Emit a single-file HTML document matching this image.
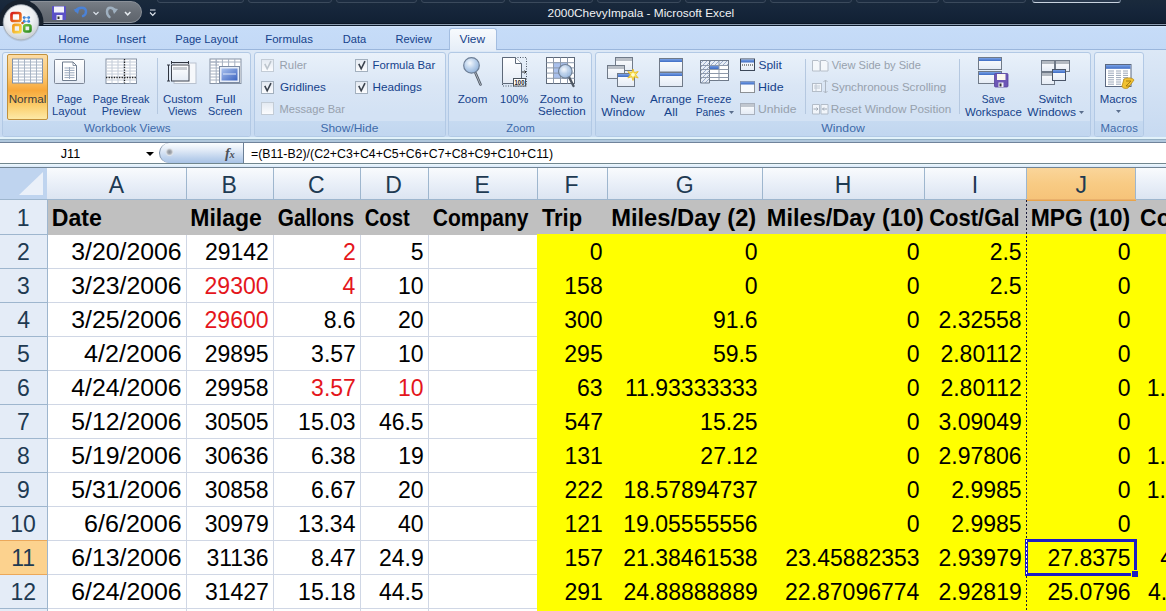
<!DOCTYPE html><html><head><meta charset="utf-8"><style>
*{margin:0;padding:0;box-sizing:border-box}
html,body{width:1166px;height:611px;overflow:hidden;background:#fff;font-family:"Liberation Sans", sans-serif}
.a{position:absolute}
svg text{font-family:"Liberation Sans",sans-serif;white-space:pre}
</style></head><body>
<div class="a" style="left:0;top:0;width:1166px;height:24px;background:linear-gradient(#1a2a3c,#15253a 50%,#112033)"></div>
<div class="a" style="left:0;top:23px;width:1166px;height:1px;background:#0b1524"></div>
<div class="a" style="left:0;top:24px;width:1166px;height:1px;background:#8b9cb0"></div>
<div class="a" style="left:0;top:25px;width:1166px;height:1px;background:#0c1a2c"></div>
<div class="a" style="left:157px;top:-3px;width:87px;height:6px;border:1px solid #3b4a5c;border-radius:3px;background:#1c2c40"></div>
<div class="a" style="left:248px;top:-3px;width:84px;height:6px;border:1px solid #3b4a5c;border-radius:3px;background:#1c2c40"></div>
<div class="a" style="left:336px;top:-3px;width:81px;height:6px;border:1px solid #3b4a5c;border-radius:3px;background:#1c2c40"></div>
<div class="a" style="left:421px;top:-3px;width:84px;height:6px;border:1px solid #3b4a5c;border-radius:3px;background:#1c2c40"></div>
<div class="a" style="left:509px;top:-3px;width:84px;height:6px;border:1px solid #3b4a5c;border-radius:3px;background:#1c2c40"></div>
<div class="a" style="left:597px;top:-3px;width:84px;height:6px;border:1px solid #3b4a5c;border-radius:3px;background:#1c2c40"></div>
<div class="a" style="left:685px;top:-3px;width:81px;height:6px;border:1px solid #3b4a5c;border-radius:3px;background:#1c2c40"></div>
<div class="a" style="left:770px;top:-3px;width:82px;height:6px;border:1px solid #3b4a5c;border-radius:3px;background:#1c2c40"></div>
<div class="a" style="left:856px;top:-3px;width:83px;height:6px;border:1px solid #3b4a5c;border-radius:3px;background:#1c2c40"></div>
<div class="a" style="left:943px;top:-3px;width:83px;height:6px;border:1px solid #3b4a5c;border-radius:3px;background:#1c2c40"></div>
<div class="a" style="left:1032px;top:-3px;width:89px;height:6px;border:1px solid #6f7f92;border-bottom-color:#c8d2de;border-radius:3px;background:#2a3a4e"></div>
<div class="a" style="left:30px;top:1px;width:112px;height:22px;border-radius:0 11px 11px 0;background:linear-gradient(#777d85,#686e76 50%,#5e646c);border:1px solid #8a9098"></div>
<div class="a" style="left:0;top:26px;width:1166px;height:24px;background:linear-gradient(#d6e6fa,#c6dcf8 2px,#c3d9f6)"></div>
<div class="a" style="left:0;top:49px;width:1166px;height:1px;background:#9ab6dc"></div>
<div class="a" style="left:449px;top:28px;width:48px;height:22px;border:1px solid #a3bde0;border-bottom:none;border-radius:3px 3px 0 0;background:linear-gradient(#f7fafd,#e6eef8)"></div>
<div class="a" style="left:0;top:50px;width:1166px;height:88px;background:linear-gradient(#dce8f6,#cfdff3 60%,#c7daf1)"></div>
<div class="a" style="left:450px;top:49px;width:46px;height:2px;background:#e6eef8"></div>
<div class="a" style="left:2px;top:52px;width:249px;height:85px;border:1px solid #b2c9e5;border-radius:3px;background:linear-gradient(#e9f1fa,#dae6f5 40%,#d3e2f4 72%)"></div>
<div class="a" style="left:3px;top:121px;width:247px;height:15px;background:linear-gradient(#c6daf1,#c1d6ef);border-radius:0 0 2px 2px"></div>
<div class="a" style="left:254px;top:52px;width:192px;height:85px;border:1px solid #b2c9e5;border-radius:3px;background:linear-gradient(#e9f1fa,#dae6f5 40%,#d3e2f4 72%)"></div>
<div class="a" style="left:255px;top:121px;width:190px;height:15px;background:linear-gradient(#c6daf1,#c1d6ef);border-radius:0 0 2px 2px"></div>
<div class="a" style="left:448px;top:52px;width:144px;height:85px;border:1px solid #b2c9e5;border-radius:3px;background:linear-gradient(#e9f1fa,#dae6f5 40%,#d3e2f4 72%)"></div>
<div class="a" style="left:449px;top:121px;width:142px;height:15px;background:linear-gradient(#c6daf1,#c1d6ef);border-radius:0 0 2px 2px"></div>
<div class="a" style="left:595px;top:52px;width:496px;height:85px;border:1px solid #b2c9e5;border-radius:3px;background:linear-gradient(#e9f1fa,#dae6f5 40%,#d3e2f4 72%)"></div>
<div class="a" style="left:596px;top:121px;width:494px;height:15px;background:linear-gradient(#c6daf1,#c1d6ef);border-radius:0 0 2px 2px"></div>
<div class="a" style="left:1094px;top:52px;width:50px;height:85px;border:1px solid #b2c9e5;border-radius:3px;background:linear-gradient(#e9f1fa,#dae6f5 40%,#d3e2f4 72%)"></div>
<div class="a" style="left:1095px;top:121px;width:48px;height:15px;background:linear-gradient(#c6daf1,#c1d6ef);border-radius:0 0 2px 2px"></div>
<div class="a" style="left:0;top:137px;width:1166px;height:2px;background:#e2f2fa"></div>
<div class="a" style="left:0;top:139px;width:1166px;height:1px;background:#93b0c4"></div>
<div class="a" style="left:0;top:140px;width:1166px;height:2px;background:#b0c7dc"></div>
<div class="a" style="left:7px;top:54px;width:41px;height:66px;border:1px solid #c2913c;border-radius:2px;background:linear-gradient(#fcdca5,#fbc66e 35%,#f8a83a 55%,#fbcf6e 80%,#fde9a6)"></div>
<div class="a" style="left:157px;top:58px;width:1px;height:56px;background:#b5c8e0"></div>
<div class="a" style="left:261px;top:59px;width:13px;height:13px;border:1px solid #c3ccd6;background:linear-gradient(#e4eaf2,#fbfcfe)"></div>
<div class="a" style="left:261px;top:81px;width:13px;height:13px;border:1px solid #a3b0be;background:linear-gradient(#e4eaf2,#fbfcfe)"></div>
<div class="a" style="left:261px;top:102px;width:13px;height:13px;border:1px solid #c3ccd6;background:linear-gradient(#e4eaf2,#fbfcfe)"></div>
<div class="a" style="left:355px;top:59px;width:13px;height:13px;border:1px solid #a3b0be;background:linear-gradient(#e4eaf2,#fbfcfe)"></div>
<div class="a" style="left:355px;top:81px;width:13px;height:13px;border:1px solid #a3b0be;background:linear-gradient(#e4eaf2,#fbfcfe)"></div>
<div class="a" style="left:805px;top:59px;width:1px;height:55px;background:#b5c8e0"></div>
<div class="a" style="left:959px;top:59px;width:1px;height:55px;background:#b5c8e0"></div>
<div class="a" style="left:0;top:142px;width:1166px;height:22px;background:#fff;border-top:1px solid #70839b;border-bottom:1px solid #71868f"></div>
<div class="a" style="left:0;top:164px;width:1166px;height:3px;background:linear-gradient(#eef9fc,#d8e7fa)"></div>
<div class="a" style="left:159px;top:143px;width:85px;height:20px;border-radius:10px 0 0 10px;background:linear-gradient(#fbfdff,#e2ebf7 35%,#bcd1ec 75%,#a9c3e6);border-left:1px solid #7d90a8;border-right:1px solid #6b7f96"></div>
<div class="a" style="left:165px;top:148px;width:9px;height:9px;border-radius:50%;background:radial-gradient(circle at 50% 45%,#8a8f96 0,#a9adb3 2px,#dfe4ea 3.5px,rgba(240,245,250,0) 4.5px)"></div>
<div class="a" style="left:0;top:167px;width:1166px;height:1px;background:#718494"></div>
<div class="a" style="left:0;top:168px;width:1166px;height:32px;background:linear-gradient(#f9fbfd,#e9eff8 50%,#dbe4f1)"></div>
<div class="a" style="left:0;top:199px;width:1166px;height:1px;background:#9eb6ce"></div>
<div class="a" style="left:0;top:168px;width:47px;height:31px;background:#bfd4ef"></div>
<div class="a" style="left:1026px;top:168px;width:110px;height:32px;background:linear-gradient(#fad59a,#f8cb84 50%,#f6c379);border-bottom:1px solid #e9b06c;border-left:1px solid #f0b870;border-right:1px solid #f0b870"></div>
<div class="a" style="left:186px;top:168px;width:1px;height:31px;background:#9eb6ce"></div>
<div class="a" style="left:273px;top:168px;width:1px;height:31px;background:#9eb6ce"></div>
<div class="a" style="left:360px;top:168px;width:1px;height:31px;background:#9eb6ce"></div>
<div class="a" style="left:428px;top:168px;width:1px;height:31px;background:#9eb6ce"></div>
<div class="a" style="left:537px;top:168px;width:1px;height:31px;background:#9eb6ce"></div>
<div class="a" style="left:607px;top:168px;width:1px;height:31px;background:#9eb6ce"></div>
<div class="a" style="left:762px;top:168px;width:1px;height:31px;background:#9eb6ce"></div>
<div class="a" style="left:924px;top:168px;width:1px;height:31px;background:#9eb6ce"></div>
<div class="a" style="left:1026px;top:168px;width:1px;height:31px;background:#9eb6ce"></div>
<div class="a" style="left:1135px;top:168px;width:1px;height:31px;background:#9eb6ce"></div>
<div class="a" style="left:0;top:200px;width:47px;height:411px;background:#e4ecf7"></div>
<div class="a" style="left:47px;top:200px;width:1px;height:411px;background:#9eb6ce"></div>
<div class="a" style="left:0;top:234px;width:48px;height:1px;background:#9eb6ce"></div>
<div class="a" style="left:0;top:268px;width:48px;height:1px;background:#9eb6ce"></div>
<div class="a" style="left:0;top:302px;width:48px;height:1px;background:#9eb6ce"></div>
<div class="a" style="left:0;top:336px;width:48px;height:1px;background:#9eb6ce"></div>
<div class="a" style="left:0;top:370px;width:48px;height:1px;background:#9eb6ce"></div>
<div class="a" style="left:0;top:404px;width:48px;height:1px;background:#9eb6ce"></div>
<div class="a" style="left:0;top:438px;width:48px;height:1px;background:#9eb6ce"></div>
<div class="a" style="left:0;top:472px;width:48px;height:1px;background:#9eb6ce"></div>
<div class="a" style="left:0;top:506px;width:48px;height:1px;background:#9eb6ce"></div>
<div class="a" style="left:0;top:541px;width:47px;height:34px;background:#fcd28e"></div>
<div class="a" style="left:0;top:540px;width:47px;height:1px;background:#eba85a"></div>
<div class="a" style="left:0;top:574px;width:47px;height:1px;background:#eba85a"></div>
<div class="a" style="left:0;top:608px;width:48px;height:1px;background:#9eb6ce"></div>
<div class="a" style="left:48px;top:200px;width:1118px;height:35px;background:#c0c0c0"></div>
<div class="a" style="left:48px;top:268px;width:489px;height:1px;background:#d0d7e5"></div>
<div class="a" style="left:48px;top:302px;width:489px;height:1px;background:#d0d7e5"></div>
<div class="a" style="left:48px;top:336px;width:489px;height:1px;background:#d0d7e5"></div>
<div class="a" style="left:48px;top:370px;width:489px;height:1px;background:#d0d7e5"></div>
<div class="a" style="left:48px;top:404px;width:489px;height:1px;background:#d0d7e5"></div>
<div class="a" style="left:48px;top:438px;width:489px;height:1px;background:#d0d7e5"></div>
<div class="a" style="left:48px;top:472px;width:489px;height:1px;background:#d0d7e5"></div>
<div class="a" style="left:48px;top:506px;width:489px;height:1px;background:#d0d7e5"></div>
<div class="a" style="left:48px;top:540px;width:489px;height:1px;background:#d0d7e5"></div>
<div class="a" style="left:48px;top:574px;width:489px;height:1px;background:#d0d7e5"></div>
<div class="a" style="left:48px;top:608px;width:489px;height:1px;background:#d0d7e5"></div>
<div class="a" style="left:186px;top:235px;width:1px;height:376px;background:#d0d7e5"></div>
<div class="a" style="left:273px;top:235px;width:1px;height:376px;background:#d0d7e5"></div>
<div class="a" style="left:360px;top:235px;width:1px;height:376px;background:#d0d7e5"></div>
<div class="a" style="left:428px;top:235px;width:1px;height:376px;background:#d0d7e5"></div>
<div class="a" style="left:537px;top:234px;width:629px;height:377px;background:#ffff00"></div>
<div class="a" style="left:1026px;top:200px;width:110px;height:1px;background:#e9a44a"></div>
<div class="a" style="left:1025px;top:539px;width:112px;height:37px;border:3px solid #1c1cc4"></div>
<div class="a" style="left:1131px;top:570px;width:8px;height:8px;background:#1c1cc4;border:1px solid #ffff00"></div>
<svg class="a" style="left:0;top:0" width="1166" height="611" viewBox="0 0 1166 611">
<defs>
<radialGradient id="obtn" cx="45%" cy="35%" r="65%"><stop offset="0" stop-color="#ffffff"/><stop offset="0.6" stop-color="#eef0f2"/><stop offset="1" stop-color="#c9ced4"/></radialGradient>
<linearGradient id="win" x1="0" y1="0" x2="0" y2="1"><stop offset="0" stop-color="#ffffff"/><stop offset="1" stop-color="#e4ebf5"/></linearGradient>
<linearGradient id="blu" x1="0" y1="0" x2="0" y2="1"><stop offset="0" stop-color="#7aa2e6"/><stop offset="1" stop-color="#3e6cc4"/></linearGradient>
<radialGradient id="lens" cx="40%" cy="35%" r="70%"><stop offset="0" stop-color="#f4f8fd"/><stop offset="0.5" stop-color="#bcd2ec"/><stop offset="1" stop-color="#8fb0d8"/></radialGradient>
<linearGradient id="lred" x1="0" y1="0" x2="1" y2="1"><stop offset="0" stop-color="#d61c1c"/><stop offset="1" stop-color="#f08a22"/></linearGradient>
<linearGradient id="lyel" x1="0" y1="0" x2="1" y2="1"><stop offset="0" stop-color="#f39a1c"/><stop offset="1" stop-color="#f8d84a"/></linearGradient>
<linearGradient id="lgrn" x1="0" y1="0" x2="1" y2="1"><stop offset="0" stop-color="#6cc040"/><stop offset="1" stop-color="#2f8a20"/></linearGradient>
<linearGradient id="scr" x1="0" y1="0" x2="1" y2="1"><stop offset="0" stop-color="#a9c1ee"/><stop offset="1" stop-color="#3b63c0"/></linearGradient>
<pattern id="hatch" width="4" height="4" patternUnits="userSpaceOnUse"><rect width="4" height="4" fill="#e8eef6"/><path d="M0 4 L4 0" stroke="#9aaccc" stroke-width="1"/></pattern>
</defs>
<clipPath id="tb"><rect x="0" y="0" width="60" height="25"/></clipPath>
<circle cx="21" cy="22.3" r="22.5" fill="#18222e" clip-path="url(#tb)"/>
<circle cx="21" cy="23" r="18.5" fill="#9aa6b4" opacity="0.35"/>
<circle cx="21" cy="22.3" r="17.6" fill="url(#obtn)" stroke="#a6adb6" stroke-width="0.8"/>
<rect x="11.5" y="13" width="8.9" height="8" rx="1.8" fill="none" stroke="url(#lred)" stroke-width="2.7"/>
<rect x="13.4" y="24.8" width="7" height="7.4" rx="1.5" fill="none" stroke="url(#lyel)" stroke-width="2.7"/>
<rect x="24.2" y="25.3" width="6.3" height="6.2" rx="1.5" fill="none" stroke="url(#lgrn)" stroke-width="2.6"/>
<circle cx="24.2" cy="17.6" r="1.4" fill="#2b7bd6"/>
<circle cx="28.7" cy="17.6" r="1.4" fill="#2b7bd6"/>
<circle cx="24.2" cy="21.4" r="1.4" fill="#2b7bd6"/>
<circle cx="28.7" cy="21.4" r="1.4" fill="#2b7bd6"/>
<path d="M24.2 17.6 H28.7 V21.4 H24.2 Z" fill="none" stroke="#5a9ae0" stroke-width="0.8"/>
<circle cx="22.5" cy="23" r="1.3" fill="#d05a20"/>
<rect x="52" y="6" width="14" height="14" rx="1" fill="#5a50c6"/>
<rect x="54" y="6.5" width="10" height="6" fill="#f2f2fa"/>
<rect x="56.5" y="15" width="6" height="5" fill="#eeeef6"/><rect x="57.5" y="16.5" width="2" height="2.5" fill="#333"/>
<path d="M76 11 C78 6.5, 86 6.5, 86 11.5 C86 14, 84.5 15.5, 83 16" stroke="#4b82d6" stroke-width="2.4" fill="none" stroke-linecap="round"/>
<path d="M73.5 9.5 L79.5 8 L78 14 Z" fill="#4b82d6"/>
<path d="M93.5 12 L96 14.5 L98.5 12" stroke="#dfe6ee" stroke-width="1.1" fill="none"/>
<path d="M115 11 C113 6.5, 107 6.5, 107 11.5 C107 14, 108 16, 109.5 17" stroke="#9fb0c0" stroke-width="2.4" fill="none" stroke-linecap="round"/>
<path d="M118 9 L112 8 L114 14 Z" fill="#9fb0c0"/>
<path d="M125 12 L127.7 14.8 L130.4 12" stroke="#e6ebf0" stroke-width="1.5" fill="none"/>
<path d="M150 10 H155.5 M150 12.5 L152.75 15.3 L155.5 12.5" stroke="#e0e6ee" stroke-width="1.2" fill="none"/>
<rect x="12.5" y="59" width="30" height="24" fill="#ffffff" stroke="#7e8ea6" stroke-width="1"/>
<line x1="18.5" y1="59" x2="18.5" y2="83" stroke="#a3b0c2" stroke-width="0.9"/>
<line x1="24.5" y1="59" x2="24.5" y2="83" stroke="#a3b0c2" stroke-width="0.9"/>
<line x1="30.5" y1="59" x2="30.5" y2="83" stroke="#a3b0c2" stroke-width="0.9"/>
<line x1="36.5" y1="59" x2="36.5" y2="83" stroke="#a3b0c2" stroke-width="0.9"/>
<line x1="12.5" y1="62.0" x2="42.5" y2="62.0" stroke="#a3b0c2" stroke-width="0.9"/>
<line x1="12.5" y1="65.0" x2="42.5" y2="65.0" stroke="#a3b0c2" stroke-width="0.9"/>
<line x1="12.5" y1="68.0" x2="42.5" y2="68.0" stroke="#a3b0c2" stroke-width="0.9"/>
<line x1="12.5" y1="71.0" x2="42.5" y2="71.0" stroke="#a3b0c2" stroke-width="0.9"/>
<line x1="12.5" y1="74.0" x2="42.5" y2="74.0" stroke="#a3b0c2" stroke-width="0.9"/>
<line x1="12.5" y1="77.0" x2="42.5" y2="77.0" stroke="#a3b0c2" stroke-width="0.9"/>
<line x1="12.5" y1="80.0" x2="42.5" y2="80.0" stroke="#a3b0c2" stroke-width="0.9"/>
<rect x="54.5" y="59.5" width="30" height="24" rx="1" fill="url(#win)" stroke="#7e8898" stroke-width="1"/>
<path d="M62.5 62 H73 L76.5 65.5 V80.5 H62.5 Z" fill="#fff" stroke="#6f7c8e" stroke-width="1"/>
<path d="M73 62 V65.5 H76.5" fill="none" stroke="#6f7c8e" stroke-width="0.8"/>
<line x1="64.5" y1="68.0" x2="74.5" y2="68.0" stroke="#9aa8bc" stroke-width="1"/>
<line x1="64.5" y1="70.4" x2="74.5" y2="70.4" stroke="#9aa8bc" stroke-width="1"/>
<line x1="64.5" y1="72.8" x2="74.5" y2="72.8" stroke="#9aa8bc" stroke-width="1"/>
<line x1="64.5" y1="75.2" x2="74.5" y2="75.2" stroke="#9aa8bc" stroke-width="1"/>
<line x1="64.5" y1="77.6" x2="74.5" y2="77.6" stroke="#9aa8bc" stroke-width="1"/>
<line x1="69.5" y1="67" x2="69.5" y2="79" stroke="#9aa8bc" stroke-width="1"/>
<rect x="106" y="59" width="30.5" height="24.5" fill="#fff" stroke="#8692a4" stroke-width="1"/>
<line x1="112.0" y1="59" x2="112.0" y2="83.5" stroke="#c4ccd8" stroke-width="1"/>
<line x1="118.0" y1="59" x2="118.0" y2="83.5" stroke="#c4ccd8" stroke-width="1"/>
<line x1="124.0" y1="59" x2="124.0" y2="83.5" stroke="#c4ccd8" stroke-width="1"/>
<line x1="130.0" y1="59" x2="130.0" y2="83.5" stroke="#c4ccd8" stroke-width="1"/>
<line x1="106" y1="62.0" x2="136.5" y2="62.0" stroke="#c4ccd8" stroke-width="1"/>
<line x1="106" y1="65.0" x2="136.5" y2="65.0" stroke="#c4ccd8" stroke-width="1"/>
<line x1="106" y1="68.0" x2="136.5" y2="68.0" stroke="#c4ccd8" stroke-width="1"/>
<line x1="106" y1="71.0" x2="136.5" y2="71.0" stroke="#c4ccd8" stroke-width="1"/>
<line x1="106" y1="74.0" x2="136.5" y2="74.0" stroke="#c4ccd8" stroke-width="1"/>
<line x1="106" y1="77.0" x2="136.5" y2="77.0" stroke="#c4ccd8" stroke-width="1"/>
<line x1="106" y1="80.0" x2="136.5" y2="80.0" stroke="#c4ccd8" stroke-width="1"/>
<line x1="124.5" y1="59" x2="124.5" y2="83.5" stroke="#222" stroke-width="1.3" stroke-dasharray="1.3,1.3"/>
<line x1="106" y1="77.5" x2="136.5" y2="77.5" stroke="#222" stroke-width="1.3" stroke-dasharray="1.3,1.3"/>
<rect x="174" y="63" width="22" height="20.5" fill="#f6f8fb" stroke="#b9c2cf" stroke-width="1"/>
<rect x="171.5" y="65" width="17.5" height="16" fill="url(#win)" stroke="#3f4550" stroke-width="1"/>
<rect x="173" y="67" width="14" height="3" fill="#c8ccd2"/>
<path d="M171.5 62.5 H188.5 M171.5 61 V64 M188.5 61 V64" stroke="#2f3540" stroke-width="1" fill="none"/>
<path d="M168.5 65 V81 M167 65 H170 M167 81 H170" stroke="#2f3540" stroke-width="1" fill="none"/>
<rect x="210" y="59" width="31" height="24.5" fill="#fff" stroke="#8692a4" stroke-width="1"/>
<line x1="216.2" y1="59" x2="216.2" y2="66" stroke="#a6b0c0" stroke-width="1"/>
<line x1="222.4" y1="59" x2="222.4" y2="66" stroke="#a6b0c0" stroke-width="1"/>
<line x1="228.6" y1="59" x2="228.6" y2="66" stroke="#a6b0c0" stroke-width="1"/>
<line x1="234.8" y1="59" x2="234.8" y2="66" stroke="#a6b0c0" stroke-width="1"/>
<line x1="210" y1="62.0" x2="219" y2="62.0" stroke="#a6b0c0" stroke-width="1"/>
<line x1="210" y1="65.0" x2="219" y2="65.0" stroke="#a6b0c0" stroke-width="1"/>
<line x1="210" y1="68.0" x2="219" y2="68.0" stroke="#a6b0c0" stroke-width="1"/>
<line x1="210" y1="71.0" x2="219" y2="71.0" stroke="#a6b0c0" stroke-width="1"/>
<line x1="210" y1="74.0" x2="219" y2="74.0" stroke="#a6b0c0" stroke-width="1"/>
<line x1="210" y1="77.0" x2="219" y2="77.0" stroke="#a6b0c0" stroke-width="1"/>
<line x1="210" y1="80.0" x2="219" y2="80.0" stroke="#a6b0c0" stroke-width="1"/>
<line x1="210" y1="62" x2="241" y2="62" stroke="#a6b0c0"/>
<line x1="216.2" y1="59" x2="216.2" y2="83.5" stroke="#a6b0c0"/>
<rect x="219.5" y="66.5" width="20" height="16" fill="#e8eef8" stroke="#7d8ca4" stroke-width="1"/>
<rect x="221.5" y="68.5" width="16" height="12" fill="url(#scr)"/>
<line x1="223" y1="74" x2="236" y2="74" stroke="#dfe8fa" stroke-width="1"/>
<line x1="475.5" y1="73" x2="480.5" y2="84.5" stroke="#4f5864" stroke-width="2.6" stroke-linecap="round"/>
<line x1="475.5" y1="73" x2="480.5" y2="84.5" stroke="#b8c0ca" stroke-width="0.9" stroke-linecap="round"/>
<circle cx="471.5" cy="65.4" r="7.8" fill="url(#lens)" stroke="#6e7f96" stroke-width="1.2"/>
<rect x="502.5" y="57.5" width="24" height="28.5" fill="none" stroke="#4d5866" stroke-width="1" stroke-dasharray="1,1.5"/>
<path d="M502.5 57.5 H515.5 L521.5 63.5 V83.5 H502.5 Z" fill="url(#win)" stroke="#5d6878" stroke-width="1"/>
<path d="M515.5 57.5 V63.5 H521.5" fill="#fff" stroke="#5d6878" stroke-width="1"/>
<path d="M522 72 H526 M524.5 70.5 L526 72 L524.5 73.5" stroke="#333" stroke-width="1" fill="none"/>
<rect x="513.5" y="78.5" width="12" height="7.5" fill="#fff" stroke="#4a525c" stroke-width="1"/>
<text x="514.5" y="85" font-size="7" font-weight="bold" fill="#222" textLength="10" lengthAdjust="spacingAndGlyphs">100</text>
<rect x="546.5" y="57.5" width="28" height="26" fill="#fff" stroke="#5d6878" stroke-width="1"/>
<rect x="553.5" y="62.5" width="14" height="5" fill="#a9c0ec"/>
<rect x="553.5" y="62.5" width="7" height="16" fill="#a9c0ec"/>
<line x1="553.5" y1="57.5" x2="553.5" y2="83.5" stroke="#8d99ac" stroke-width="1"/>
<line x1="560.5" y1="57.5" x2="560.5" y2="83.5" stroke="#8d99ac" stroke-width="1"/>
<line x1="567.5" y1="57.5" x2="567.5" y2="83.5" stroke="#8d99ac" stroke-width="1"/>
<line x1="546.5" y1="62.7" x2="574.5" y2="62.7" stroke="#8d99ac" stroke-width="1"/>
<line x1="546.5" y1="67.9" x2="574.5" y2="67.9" stroke="#8d99ac" stroke-width="1"/>
<line x1="546.5" y1="73.1" x2="574.5" y2="73.1" stroke="#8d99ac" stroke-width="1"/>
<line x1="546.5" y1="78.3" x2="574.5" y2="78.3" stroke="#8d99ac" stroke-width="1"/>
<line x1="569" y1="77" x2="573.5" y2="86" stroke="#4f5864" stroke-width="2.4" stroke-linecap="round"/>
<circle cx="565.3" cy="71.3" r="6.8" fill="url(#lens)" stroke="#6e7f96" stroke-width="1.2" opacity="0.95"/>
<rect x="615.5" y="57.5" width="17.0" height="13.0" fill="url(#win)" stroke="#707a88" stroke-width="1"/>
<rect x="616.0" y="58.0" width="16.0" height="3.0" fill="#b9bfc7"/>
<rect x="607.5" y="65.5" width="17.0" height="13.0" fill="url(#win)" stroke="#707a88" stroke-width="1"/>
<rect x="608.0" y="66.0" width="16.0" height="3.0" fill="#b9bfc7"/>
<rect x="617.5" y="73.5" width="17.0" height="13.0" fill="url(#win)" stroke="#707a88" stroke-width="1"/>
<rect x="618.0" y="74.0" width="16.0" height="3.0" fill="url(#blu)"/>
<path d="M633 69 L634.3 72.6 L638.2 71.5 L635.6 74.7 L638.2 78 L634.3 76.8 L633 80.5 L631.7 76.8 L627.8 78 L630.4 74.7 L627.8 71.5 L631.7 72.6 Z" fill="#f9e55a" stroke="#e8b820" stroke-width="0.8"/>
<circle cx="633" cy="74.7" r="1.8" fill="#fffbd0"/>
<rect x="659.5" y="58.5" width="23.0" height="13.5" fill="url(#win)" stroke="#707a88" stroke-width="1"/>
<rect x="660.0" y="59.0" width="22.0" height="3.0" fill="url(#blu)"/>
<rect x="659.5" y="72.5" width="23.0" height="14.0" fill="url(#win)" stroke="#707a88" stroke-width="1"/>
<rect x="660.0" y="73.0" width="22.0" height="3.0" fill="url(#blu)"/>
<rect x="700.5" y="60.5" width="28" height="20" fill="#fff" stroke="#6f7a8a" stroke-width="1"/>
<rect x="701" y="61" width="27" height="4" fill="url(#hatch)"/>
<path d="M700.5 60.5 H709.5 V83 H700.5 Z" fill="url(#hatch)" stroke="#6f7a8a" stroke-width="1"/>
<rect x="710" y="65" width="9" height="4" fill="url(#blu)"/>
<line x1="719.0" y1="60.5" x2="719.0" y2="80.5" stroke="#8e99aa" stroke-width="1"/>
<line x1="700.5" y1="65.5" x2="728.5" y2="65.5" stroke="#8e99aa" stroke-width="1"/>
<line x1="700.5" y1="69.5" x2="728.5" y2="69.5" stroke="#8e99aa" stroke-width="1"/>
<line x1="700.5" y1="73.5" x2="728.5" y2="73.5" stroke="#8e99aa" stroke-width="1"/>
<line x1="700.5" y1="77.5" x2="728.5" y2="77.5" stroke="#8e99aa" stroke-width="1"/>
<rect x="740.5" y="59.0" width="14.0" height="11.5" fill="url(#win)" stroke="#3c4758" stroke-width="1"/>
<rect x="741.0" y="59.5" width="13.0" height="3.0" fill="url(#blu)"/>
<line x1="742" y1="65" x2="753" y2="65" stroke="#222" stroke-dasharray="1,1"/>
<rect x="740.5" y="81.5" width="14" height="11" fill="#f8fafc" stroke="#333" stroke-width="1" stroke-dasharray="1,1"/>
<rect x="740.5" y="81.5" width="14" height="3" fill="url(#blu)"/>
<rect x="740.5" y="103.5" width="14.0" height="11.0" fill="url(#win)" stroke="#a9b1bd" stroke-width="1"/>
<rect x="741.0" y="104.0" width="13.0" height="3.0" fill="#c1c7cf"/>
<g opacity="0.75">
<path d="M812.5 60.5 H818 L820 62.5 V71 H812.5 Z M820.5 60.5 H826 L828 62.5 V71 H820.5 Z" fill="#fbfcfd" stroke="#a8b0ba" stroke-width="1"/>
<rect x="812.5" y="83.5" width="9" height="8" fill="#fbfcfd" stroke="#a8b0ba"/>
<path d="M814 86 H820 M814 88 H820 M816 84 V91" stroke="#b8c0ca"/>
<path d="M825.5 80 V93 M823.5 82 L825.5 80 L827.5 82 M823.5 91 L825.5 93 L827.5 91" stroke="#a0a8b2" fill="none"/>
<path d="M812.5 104.5 H819.5 V114 H812.5 Z M821 104.5 H828 V114 H821 Z" fill="#fbfcfd" stroke="#a8b0ba"/>
<path d="M813.5 109 H818 M816.5 107.5 L818 109 L816.5 110.5 M827 109 H822.5 M824 107.5 L822.5 109 L824 110.5" stroke="#8a929c" fill="none"/>
</g>
<rect x="978.5" y="57.5" width="23.0" height="12.0" fill="url(#win)" stroke="#707a88" stroke-width="1"/>
<rect x="979.0" y="58.0" width="22.0" height="3.0" fill="url(#blu)"/>
<rect x="978.5" y="71.5" width="23.0" height="12.0" fill="url(#win)" stroke="#707a88" stroke-width="1"/>
<rect x="979.0" y="72.0" width="22.0" height="3.0" fill="url(#blu)"/>
<rect x="994.5" y="73.5" width="13.5" height="13.5" rx="1" fill="#6d57b6" stroke="#56439c" stroke-width="0.8"/>
<rect x="997" y="74" width="8.5" height="6" fill="#fbf8ee"/>
<rect x="998.5" y="82.5" width="5" height="4.5" fill="#f2f2f6"/><rect x="999.5" y="83.5" width="2" height="3" fill="#333"/>
<rect x="1041.5" y="60.5" width="13.0" height="11.0" fill="url(#win)" stroke="#707a88" stroke-width="1"/>
<rect x="1042.0" y="61.0" width="12.0" height="3.0" fill="#b3b9c1"/>
<rect x="1055.5" y="60.5" width="14.0" height="11.0" fill="url(#win)" stroke="#707a88" stroke-width="1"/>
<rect x="1056.0" y="61.0" width="13.0" height="3.0" fill="#b3b9c1"/>
<rect x="1041.5" y="72.5" width="13.0" height="12.0" fill="url(#win)" stroke="#707a88" stroke-width="1"/>
<rect x="1042.0" y="73.0" width="12.0" height="3.0" fill="#b3b9c1"/>
<rect x="1052.5" y="69.5" width="13.0" height="11.0" fill="url(#win)" stroke="#4a5568" stroke-width="1"/>
<rect x="1053.0" y="70.0" width="12.0" height="3.0" fill="url(#blu)"/>
<rect x="1105.5" y="64.5" width="25.5" height="22" fill="#fff" stroke="#5b6880" stroke-width="1"/>
<rect x="1106" y="65" width="24.5" height="3.8" fill="url(#blu)"/>
<path d="M1108 71.0 H1114 M1116 71.0 H1121 M1123 71.0 H1128" stroke="#9aa6b8" stroke-width="1"/>
<path d="M1108 73.2 H1114 M1116 73.2 H1121 M1123 73.2 H1128" stroke="#9aa6b8" stroke-width="1"/>
<path d="M1108 75.4 H1114 M1116 75.4 H1121 M1123 75.4 H1128" stroke="#9aa6b8" stroke-width="1"/>
<path d="M1108 77.6 H1114 M1116 77.6 H1121 M1123 77.6 H1128" stroke="#9aa6b8" stroke-width="1"/>
<path d="M1108 79.8 H1114 M1116 79.8 H1121 M1123 79.8 H1128" stroke="#9aa6b8" stroke-width="1"/>
<path d="M1108 82.0 H1114 M1116 82.0 H1121 M1123 82.0 H1128" stroke="#9aa6b8" stroke-width="1"/>
<path d="M1108 84.2 H1114 M1116 84.2 H1121 M1123 84.2 H1128" stroke="#9aa6b8" stroke-width="1"/>
<path d="M1124 79 C1128 77, 1133 78, 1134 80 L1128 88 C1125 89, 1122 88, 1122 86 Z" fill="#f1c232" stroke="#b88a12" stroke-width="0.8"/>
<path d="M1126 81 L1131 81 L1126 86 L1130 86" stroke="#9b6e08" stroke-width="0.8" fill="none"/>
<text x="547.61" y="17.20" font-size="11.50" fill="#f0f2f4" textLength="186.61" lengthAdjust="spacingAndGlyphs">2000ChevyImpala - Microsoft Excel</text>
<text x="58.27" y="43.00" font-size="11.50" fill="#15428b" textLength="30.98" lengthAdjust="spacingAndGlyphs">Home</text>
<text x="116.34" y="43.00" font-size="11.50" fill="#15428b" textLength="29.43" lengthAdjust="spacingAndGlyphs">Insert</text>
<text x="175.31" y="43.00" font-size="11.50" fill="#15428b" textLength="62.45" lengthAdjust="spacingAndGlyphs">Page Layout</text>
<text x="265.29" y="43.00" font-size="11.50" fill="#15428b" textLength="47.59" lengthAdjust="spacingAndGlyphs">Formulas</text>
<text x="342.81" y="43.00" font-size="11.50" fill="#15428b" textLength="23.41" lengthAdjust="spacingAndGlyphs">Data</text>
<text x="395.42" y="43.00" font-size="11.50" fill="#15428b" textLength="36.27" lengthAdjust="spacingAndGlyphs">Review</text>
<text x="459.44" y="43.00" font-size="11.50" fill="#15428b" textLength="25.55" lengthAdjust="spacingAndGlyphs">View</text>
<text x="83.94" y="132.20" font-size="11.50" fill="#3e6aaa" textLength="86.58" lengthAdjust="spacingAndGlyphs">Workbook Views</text>
<text x="320.46" y="132.20" font-size="11.50" fill="#3e6aaa" textLength="57.89" lengthAdjust="spacingAndGlyphs">Show/Hide</text>
<text x="506.17" y="132.20" font-size="11.50" fill="#3e6aaa" textLength="28.52" lengthAdjust="spacingAndGlyphs">Zoom</text>
<text x="821.34" y="132.20" font-size="11.50" fill="#3e6aaa" textLength="43.42" lengthAdjust="spacingAndGlyphs">Window</text>
<text x="1100.59" y="132.20" font-size="11.50" fill="#3e6aaa" textLength="37.29" lengthAdjust="spacingAndGlyphs">Macros</text>
<text x="8.67" y="103.00" font-size="11.50" fill="#3c3c3c" textLength="37.63" lengthAdjust="spacingAndGlyphs">Normal</text>
<text x="56.73" y="103.00" font-size="11.50" fill="#15428b" textLength="25.36" lengthAdjust="spacingAndGlyphs">Page</text>
<text x="51.90" y="115.40" font-size="11.50" fill="#15428b" textLength="33.89" lengthAdjust="spacingAndGlyphs">Layout</text>
<text x="92.73" y="103.00" font-size="11.50" fill="#15428b" textLength="56.78" lengthAdjust="spacingAndGlyphs">Page Break</text>
<text x="101.73" y="115.40" font-size="11.50" fill="#15428b" textLength="38.84" lengthAdjust="spacingAndGlyphs">Preview</text>
<text x="162.93" y="103.00" font-size="11.50" fill="#15428b">Custom</text>
<text x="167.95" y="115.40" font-size="11.50" fill="#15428b" textLength="28.73" lengthAdjust="spacingAndGlyphs">Views</text>
<text x="215.40" y="103.00" font-size="11.50" fill="#15428b" textLength="20.13" lengthAdjust="spacingAndGlyphs">Full</text>
<text x="208.11" y="115.40" font-size="11.50" fill="#15428b" textLength="34.23" lengthAdjust="spacingAndGlyphs">Screen</text>
<path d="M264.8 63.8 l2.4 5 l3.8 -7.6" stroke="#bcc4cc" stroke-width="1.6" fill="none"/>
<text x="279.59" y="68.70" font-size="11.50" fill="#97a1ad" textLength="27.24" lengthAdjust="spacingAndGlyphs">Ruler</text>
<path d="M264.8 85.8 l2.4 5 l3.8 -7.6" stroke="#3a424d" stroke-width="1.6" fill="none"/>
<text x="279.92" y="91.00" font-size="11.50" fill="#15428b" textLength="46.00" lengthAdjust="spacingAndGlyphs">Gridlines</text>
<text x="279.61" y="113.30" font-size="11.50" fill="#97a1ad" textLength="65.27" lengthAdjust="spacingAndGlyphs">Message Bar</text>
<path d="M358.8 63.8 l2.4 5 l3.8 -7.6" stroke="#3a424d" stroke-width="1.6" fill="none"/>
<text x="372.59" y="68.70" font-size="11.50" fill="#15428b" textLength="62.60" lengthAdjust="spacingAndGlyphs">Formula Bar</text>
<path d="M358.8 85.8 l2.4 5 l3.8 -7.6" stroke="#3a424d" stroke-width="1.6" fill="none"/>
<text x="372.57" y="91.00" font-size="11.50" fill="#15428b" textLength="49.35" lengthAdjust="spacingAndGlyphs">Headings</text>
<text x="457.65" y="103.00" font-size="11.50" fill="#15428b" textLength="29.66" lengthAdjust="spacingAndGlyphs">Zoom</text>
<text x="500.08" y="103.00" font-size="11.50" fill="#15428b" textLength="28.08" lengthAdjust="spacingAndGlyphs">100%</text>
<text x="539.65" y="103.00" font-size="11.50" fill="#15428b" textLength="43.26" lengthAdjust="spacingAndGlyphs">Zoom to</text>
<text x="538.08" y="115.40" font-size="11.50" fill="#15428b" textLength="47.66" lengthAdjust="spacingAndGlyphs">Selection</text>
<text x="610.34" y="102.80" font-size="11.50" fill="#15428b" textLength="24.01" lengthAdjust="spacingAndGlyphs">New</text>
<text x="601.34" y="115.50" font-size="11.50" fill="#15428b" textLength="43.42" lengthAdjust="spacingAndGlyphs">Window</text>
<text x="650.00" y="103.00" font-size="11.50" fill="#15428b" textLength="41.56" lengthAdjust="spacingAndGlyphs">Arrange</text>
<text x="664.00" y="115.50" font-size="11.50" fill="#15428b" textLength="13.61" lengthAdjust="spacingAndGlyphs">All</text>
<text x="697.12" y="103.00" font-size="11.50" fill="#15428b" textLength="34.41" lengthAdjust="spacingAndGlyphs">Freeze</text>
<text x="695.68" y="115.50" font-size="11.50" fill="#15428b" textLength="29.19" lengthAdjust="spacingAndGlyphs">Panes</text>
<path d="M729 111 h5 l-2.5 3 z" fill="#5a6e8c"/>
<text x="758.46" y="68.70" font-size="11.50" fill="#15428b" textLength="23.30" lengthAdjust="spacingAndGlyphs">Split</text>
<text x="758.01" y="90.80" font-size="11.50" fill="#15428b" textLength="25.58" lengthAdjust="spacingAndGlyphs">Hide</text>
<text x="758.09" y="113.00" font-size="11.50" fill="#97a1ad" textLength="38.44" lengthAdjust="spacingAndGlyphs">Unhide</text>
<text x="831.64" y="68.70" font-size="11.50" fill="#97a1ad" textLength="89.28" lengthAdjust="spacingAndGlyphs">View Side by Side</text>
<text x="831.18" y="91.00" font-size="11.50" fill="#97a1ad" textLength="115.07" lengthAdjust="spacingAndGlyphs">Synchronous Scrolling</text>
<text x="830.76" y="112.80" font-size="11.50" fill="#97a1ad" textLength="120.63" lengthAdjust="spacingAndGlyphs">Reset Window Position</text>
<text x="981.84" y="103.00" font-size="11.50" fill="#15428b" textLength="23.21" lengthAdjust="spacingAndGlyphs">Save</text>
<text x="964.94" y="115.50" font-size="11.50" fill="#15428b" textLength="56.81" lengthAdjust="spacingAndGlyphs">Workspace</text>
<text x="1038.38" y="103.00" font-size="11.50" fill="#15428b">Switch</text>
<text x="1027.34" y="115.50" font-size="11.50" fill="#15428b" textLength="48.60" lengthAdjust="spacingAndGlyphs">Windows</text>
<path d="M1079 111 h5 l-2.5 3 z" fill="#5a6e8c"/>
<text x="1099.69" y="103.00" font-size="11.50" fill="#15428b" textLength="37.39" lengthAdjust="spacingAndGlyphs">Macros</text>
<path d="M1116 110 h5 l-2.5 3 z" fill="#5a6e8c"/>
<text x="60.81" y="157.90" font-size="12.50" fill="#000" textLength="19.40" lengthAdjust="spacingAndGlyphs">J11</text>
<path d="M146 152 h8 l-4 4 z" fill="#000"/>
<text x="225" y="158.3" font-size="14.5" style="font-family:'Liberation Serif',serif" font-style="italic" font-weight="bold" fill="#4a4f58">f</text><text x="229.5" y="158.3" font-size="10.5" style="font-family:'Liberation Serif',serif" font-style="italic" font-weight="bold" fill="#4a4f58">x</text>
<text x="251.08" y="158.00" font-size="12.50" fill="#000" textLength="301.99" lengthAdjust="spacingAndGlyphs">=(B11-B2)/(C2+C3+C4+C5+C6+C7+C8+C9+C10+C11)</text>
<path d="M43 172 V195 H19 Z" fill="#eaf0f9"/>
<text x="108.85" y="192.60" font-size="23.00" fill="#1e3a52">A</text>
<text x="221.51" y="192.60" font-size="23.00" fill="#1e3a52">B</text>
<text x="308.05" y="192.60" font-size="23.00" fill="#1e3a52">C</text>
<text x="385.32" y="192.60" font-size="23.00" fill="#1e3a52">D</text>
<text x="474.39" y="192.60" font-size="23.00" fill="#1e3a52">E</text>
<text x="564.52" y="192.60" font-size="23.00" fill="#1e3a52">F</text>
<text x="675.82" y="192.60" font-size="23.00" fill="#1e3a52">G</text>
<text x="834.72" y="192.60" font-size="23.00" fill="#1e3a52">H</text>
<text x="971.84" y="192.60" font-size="23.00" fill="#1e3a52">I</text>
<text x="1075.44" y="192.60" font-size="23.00" fill="#1e3a52">J</text>
<text x="16.77" y="226.00" font-size="23.00" fill="#1e3a52">1</text>
<text x="17.12" y="260.00" font-size="23.00" fill="#1e3a52">2</text>
<text x="17.12" y="294.00" font-size="23.00" fill="#1e3a52">3</text>
<text x="17.23" y="328.00" font-size="23.00" fill="#1e3a52">4</text>
<text x="17.12" y="362.00" font-size="23.00" fill="#1e3a52">5</text>
<text x="17.00" y="396.00" font-size="23.00" fill="#1e3a52">6</text>
<text x="17.12" y="430.00" font-size="23.00" fill="#1e3a52">7</text>
<text x="17.06" y="464.00" font-size="23.00" fill="#1e3a52">8</text>
<text x="17.12" y="498.00" font-size="23.00" fill="#1e3a52">9</text>
<text x="10.28" y="532.00" font-size="23.00" fill="#1e3a52">10</text>
<text x="11.25" y="566.00" font-size="23.00" fill="#1e3a52">11</text>
<text x="10.45" y="600.00" font-size="23.00" fill="#1e3a52">12</text>
<line x1="1026.5" y1="200" x2="1026.5" y2="611" stroke="#1a1a3a" stroke-width="1" stroke-dasharray="2,2"/>
<line x1="1026.5" y1="540" x2="1026.5" y2="575" stroke="#ffffff" stroke-width="1" stroke-dasharray="2,2"/>
<text x="51.70" y="225.80" font-size="23.00" font-weight="bold" fill="#000" textLength="50.17" lengthAdjust="spacingAndGlyphs">Date</text>
<text x="190.31" y="225.80" font-size="23.00" font-weight="bold" fill="#000">Milage</text>
<text x="277.77" y="225.80" font-size="23.00" font-weight="bold" fill="#000" textLength="76.32" lengthAdjust="spacingAndGlyphs">Gallons</text>
<text x="364.69" y="225.80" font-size="23.00" font-weight="bold" fill="#000" textLength="44.96" lengthAdjust="spacingAndGlyphs">Cost</text>
<text x="432.86" y="225.80" font-size="23.00" font-weight="bold" fill="#000" textLength="95.67" lengthAdjust="spacingAndGlyphs">Company</text>
<text x="541.88" y="225.80" font-size="23.00" font-weight="bold" fill="#000" textLength="40.16" lengthAdjust="spacingAndGlyphs">Trip</text>
<text x="611.16" y="225.80" font-size="23.00" font-weight="bold" fill="#000" textLength="145.09" lengthAdjust="spacingAndGlyphs">Miles/Day (2)</text>
<text x="766.87" y="225.80" font-size="23.00" font-weight="bold" fill="#000" textLength="157.00" lengthAdjust="spacingAndGlyphs">Miles/Day (10)</text>
<text x="929.22" y="225.80" font-size="23.00" font-weight="bold" fill="#000" textLength="90.35" lengthAdjust="spacingAndGlyphs">Cost/Gal</text>
<text x="1030.71" y="225.80" font-size="23.00" font-weight="bold" fill="#000" textLength="99.32" lengthAdjust="spacingAndGlyphs">MPG (10)</text>
<text x="1140.08" y="225.80" font-size="23.00" font-weight="bold" fill="#000">Co</text>
<text x="71.20" y="259.80" font-size="23.00" fill="#000" textLength="110.47" lengthAdjust="spacingAndGlyphs">3/20/2006</text>
<text x="204.91" y="259.80" font-size="23.00" fill="#000">29142</text>
<text x="343.09" y="259.80" font-size="23.00" fill="#e4161c">2</text>
<text x="410.85" y="259.80" font-size="23.00" fill="#000">5</text>
<text x="589.74" y="259.80" font-size="23.00" fill="#000">0</text>
<text x="744.74" y="259.80" font-size="23.00" fill="#000">0</text>
<text x="906.74" y="259.80" font-size="23.00" fill="#000">0</text>
<text x="989.65" y="259.80" font-size="23.00" fill="#000">2.5</text>
<text x="1117.74" y="259.80" font-size="23.00" fill="#000">0</text>
<text x="71.20" y="293.80" font-size="23.00" fill="#000" textLength="110.47" lengthAdjust="spacingAndGlyphs">3/23/2006</text>
<text x="204.56" y="293.80" font-size="23.00" fill="#e4161c">29300</text>
<text x="342.62" y="293.80" font-size="23.00" fill="#e4161c">4</text>
<text x="397.97" y="293.80" font-size="23.00" fill="#000">10</text>
<text x="564.33" y="293.80" font-size="23.00" fill="#000">158</text>
<text x="744.74" y="293.80" font-size="23.00" fill="#000">0</text>
<text x="906.74" y="293.80" font-size="23.00" fill="#000">0</text>
<text x="989.65" y="293.80" font-size="23.00" fill="#000">2.5</text>
<text x="1117.74" y="293.80" font-size="23.00" fill="#000">0</text>
<text x="71.20" y="327.80" font-size="23.00" fill="#000" textLength="110.47" lengthAdjust="spacingAndGlyphs">3/25/2006</text>
<text x="204.56" y="327.80" font-size="23.00" fill="#e4161c">29600</text>
<text x="323.65" y="327.80" font-size="23.00" fill="#000">8.6</text>
<text x="397.98" y="327.80" font-size="23.00" fill="#000">20</text>
<text x="564.21" y="327.80" font-size="23.00" fill="#000">300</text>
<text x="712.89" y="327.80" font-size="23.00" fill="#000">91.6</text>
<text x="906.74" y="327.80" font-size="23.00" fill="#000">0</text>
<text x="938.48" y="327.80" font-size="23.00" fill="#000">2.32558</text>
<text x="1117.74" y="327.80" font-size="23.00" fill="#000">0</text>
<text x="84.11" y="361.80" font-size="23.00" fill="#000" textLength="97.66" lengthAdjust="spacingAndGlyphs">4/2/2006</text>
<text x="204.68" y="361.80" font-size="23.00" fill="#000">29895</text>
<text x="311.11" y="361.80" font-size="23.00" fill="#000">3.57</text>
<text x="397.97" y="361.80" font-size="23.00" fill="#000">10</text>
<text x="564.33" y="361.80" font-size="23.00" fill="#000">295</text>
<text x="712.89" y="361.80" font-size="23.00" fill="#000">59.5</text>
<text x="906.74" y="361.80" font-size="23.00" fill="#000">0</text>
<text x="940.43" y="361.80" font-size="23.00" fill="#000">2.80112</text>
<text x="1117.74" y="361.80" font-size="23.00" fill="#000">0</text>
<text x="71.23" y="395.80" font-size="23.00" fill="#000" textLength="110.43" lengthAdjust="spacingAndGlyphs">4/24/2006</text>
<text x="204.68" y="395.80" font-size="23.00" fill="#000">29958</text>
<text x="311.11" y="395.80" font-size="23.00" fill="#e4161c">3.57</text>
<text x="397.97" y="395.80" font-size="23.00" fill="#e4161c">10</text>
<text x="577.09" y="395.80" font-size="23.00" fill="#000">63</text>
<text x="625.02" y="395.80" font-size="23.00" fill="#000">11.93333333</text>
<text x="906.74" y="395.80" font-size="23.00" fill="#000">0</text>
<text x="940.43" y="395.80" font-size="23.00" fill="#000">2.80112</text>
<text x="1117.74" y="395.80" font-size="23.00" fill="#000">0</text>
<text x="1146.78" y="395.80" font-size="23.00" fill="#000">1.</text>
<text x="71.20" y="429.80" font-size="23.00" fill="#000" textLength="110.47" lengthAdjust="spacingAndGlyphs">5/12/2006</text>
<text x="204.68" y="429.80" font-size="23.00" fill="#000">30505</text>
<text x="298.12" y="429.80" font-size="23.00" fill="#000">15.03</text>
<text x="378.88" y="429.80" font-size="23.00" fill="#000">46.5</text>
<text x="564.56" y="429.80" font-size="23.00" fill="#000">547</text>
<text x="700.12" y="429.80" font-size="23.00" fill="#000">15.25</text>
<text x="906.74" y="429.80" font-size="23.00" fill="#000">0</text>
<text x="938.59" y="429.80" font-size="23.00" fill="#000">3.09049</text>
<text x="1117.74" y="429.80" font-size="23.00" fill="#000">0</text>
<text x="71.20" y="463.80" font-size="23.00" fill="#000" textLength="110.47" lengthAdjust="spacingAndGlyphs">5/19/2006</text>
<text x="204.68" y="463.80" font-size="23.00" fill="#000">30636</text>
<text x="310.88" y="463.80" font-size="23.00" fill="#000">6.38</text>
<text x="398.20" y="463.80" font-size="23.00" fill="#000">19</text>
<text x="564.44" y="463.80" font-size="23.00" fill="#000">131</text>
<text x="700.35" y="463.80" font-size="23.00" fill="#000">27.12</text>
<text x="906.74" y="463.80" font-size="23.00" fill="#000">0</text>
<text x="938.48" y="463.80" font-size="23.00" fill="#000">2.97806</text>
<text x="1117.74" y="463.80" font-size="23.00" fill="#000">0</text>
<text x="1146.78" y="463.80" font-size="23.00" fill="#000">1.</text>
<text x="71.20" y="497.80" font-size="23.00" fill="#000" textLength="110.47" lengthAdjust="spacingAndGlyphs">5/31/2006</text>
<text x="204.68" y="497.80" font-size="23.00" fill="#000">30858</text>
<text x="311.12" y="497.80" font-size="23.00" fill="#000">6.67</text>
<text x="397.98" y="497.80" font-size="23.00" fill="#000">20</text>
<text x="564.56" y="497.80" font-size="23.00" fill="#000">222</text>
<text x="623.53" y="497.80" font-size="23.00" fill="#000">18.57894737</text>
<text x="906.74" y="497.80" font-size="23.00" fill="#000">0</text>
<text x="951.24" y="497.80" font-size="23.00" fill="#000">2.9985</text>
<text x="1117.74" y="497.80" font-size="23.00" fill="#000">0</text>
<text x="1146.78" y="497.80" font-size="23.00" fill="#000">1.</text>
<text x="84.04" y="531.80" font-size="23.00" fill="#000" textLength="97.73" lengthAdjust="spacingAndGlyphs">6/6/2006</text>
<text x="204.79" y="531.80" font-size="23.00" fill="#000">30979</text>
<text x="297.89" y="531.80" font-size="23.00" fill="#000">13.34</text>
<text x="397.98" y="531.80" font-size="23.00" fill="#000">40</text>
<text x="564.44" y="531.80" font-size="23.00" fill="#000">121</text>
<text x="623.30" y="531.80" font-size="23.00" fill="#000">19.05555556</text>
<text x="906.74" y="531.80" font-size="23.00" fill="#000">0</text>
<text x="951.24" y="531.80" font-size="23.00" fill="#000">2.9985</text>
<text x="1117.74" y="531.80" font-size="23.00" fill="#000">0</text>
<text x="71.18" y="565.80" font-size="23.00" fill="#000" textLength="110.49" lengthAdjust="spacingAndGlyphs">6/13/2006</text>
<text x="206.41" y="565.80" font-size="23.00" fill="#000">31136</text>
<text x="311.11" y="565.80" font-size="23.00" fill="#000">8.47</text>
<text x="379.00" y="565.80" font-size="23.00" fill="#000">24.9</text>
<text x="564.56" y="565.80" font-size="23.00" fill="#000">157</text>
<text x="623.30" y="565.80" font-size="23.00" fill="#000">21.38461538</text>
<text x="785.30" y="565.80" font-size="23.00" fill="#000">23.45882353</text>
<text x="938.59" y="565.80" font-size="23.00" fill="#000">2.93979</text>
<text x="1047.47" y="565.80" font-size="23.00" fill="#000">27.8375</text>
<text x="1160.34" y="565.80" font-size="23.00" fill="#000">4</text>
<text x="71.18" y="599.80" font-size="23.00" fill="#000" textLength="110.49" lengthAdjust="spacingAndGlyphs">6/24/2006</text>
<text x="204.91" y="599.80" font-size="23.00" fill="#000">31427</text>
<text x="298.12" y="599.80" font-size="23.00" fill="#000">15.18</text>
<text x="378.88" y="599.80" font-size="23.00" fill="#000">44.5</text>
<text x="564.44" y="599.80" font-size="23.00" fill="#000">291</text>
<text x="623.42" y="599.80" font-size="23.00" fill="#000">24.88888889</text>
<text x="785.07" y="599.80" font-size="23.00" fill="#000">22.87096774</text>
<text x="938.59" y="599.80" font-size="23.00" fill="#000">2.92819</text>
<text x="1047.47" y="599.80" font-size="23.00" fill="#000">25.0796</text>
<text x="1148.04" y="599.80" font-size="23.00" fill="#000">4.</text>
</svg>
</body></html>
